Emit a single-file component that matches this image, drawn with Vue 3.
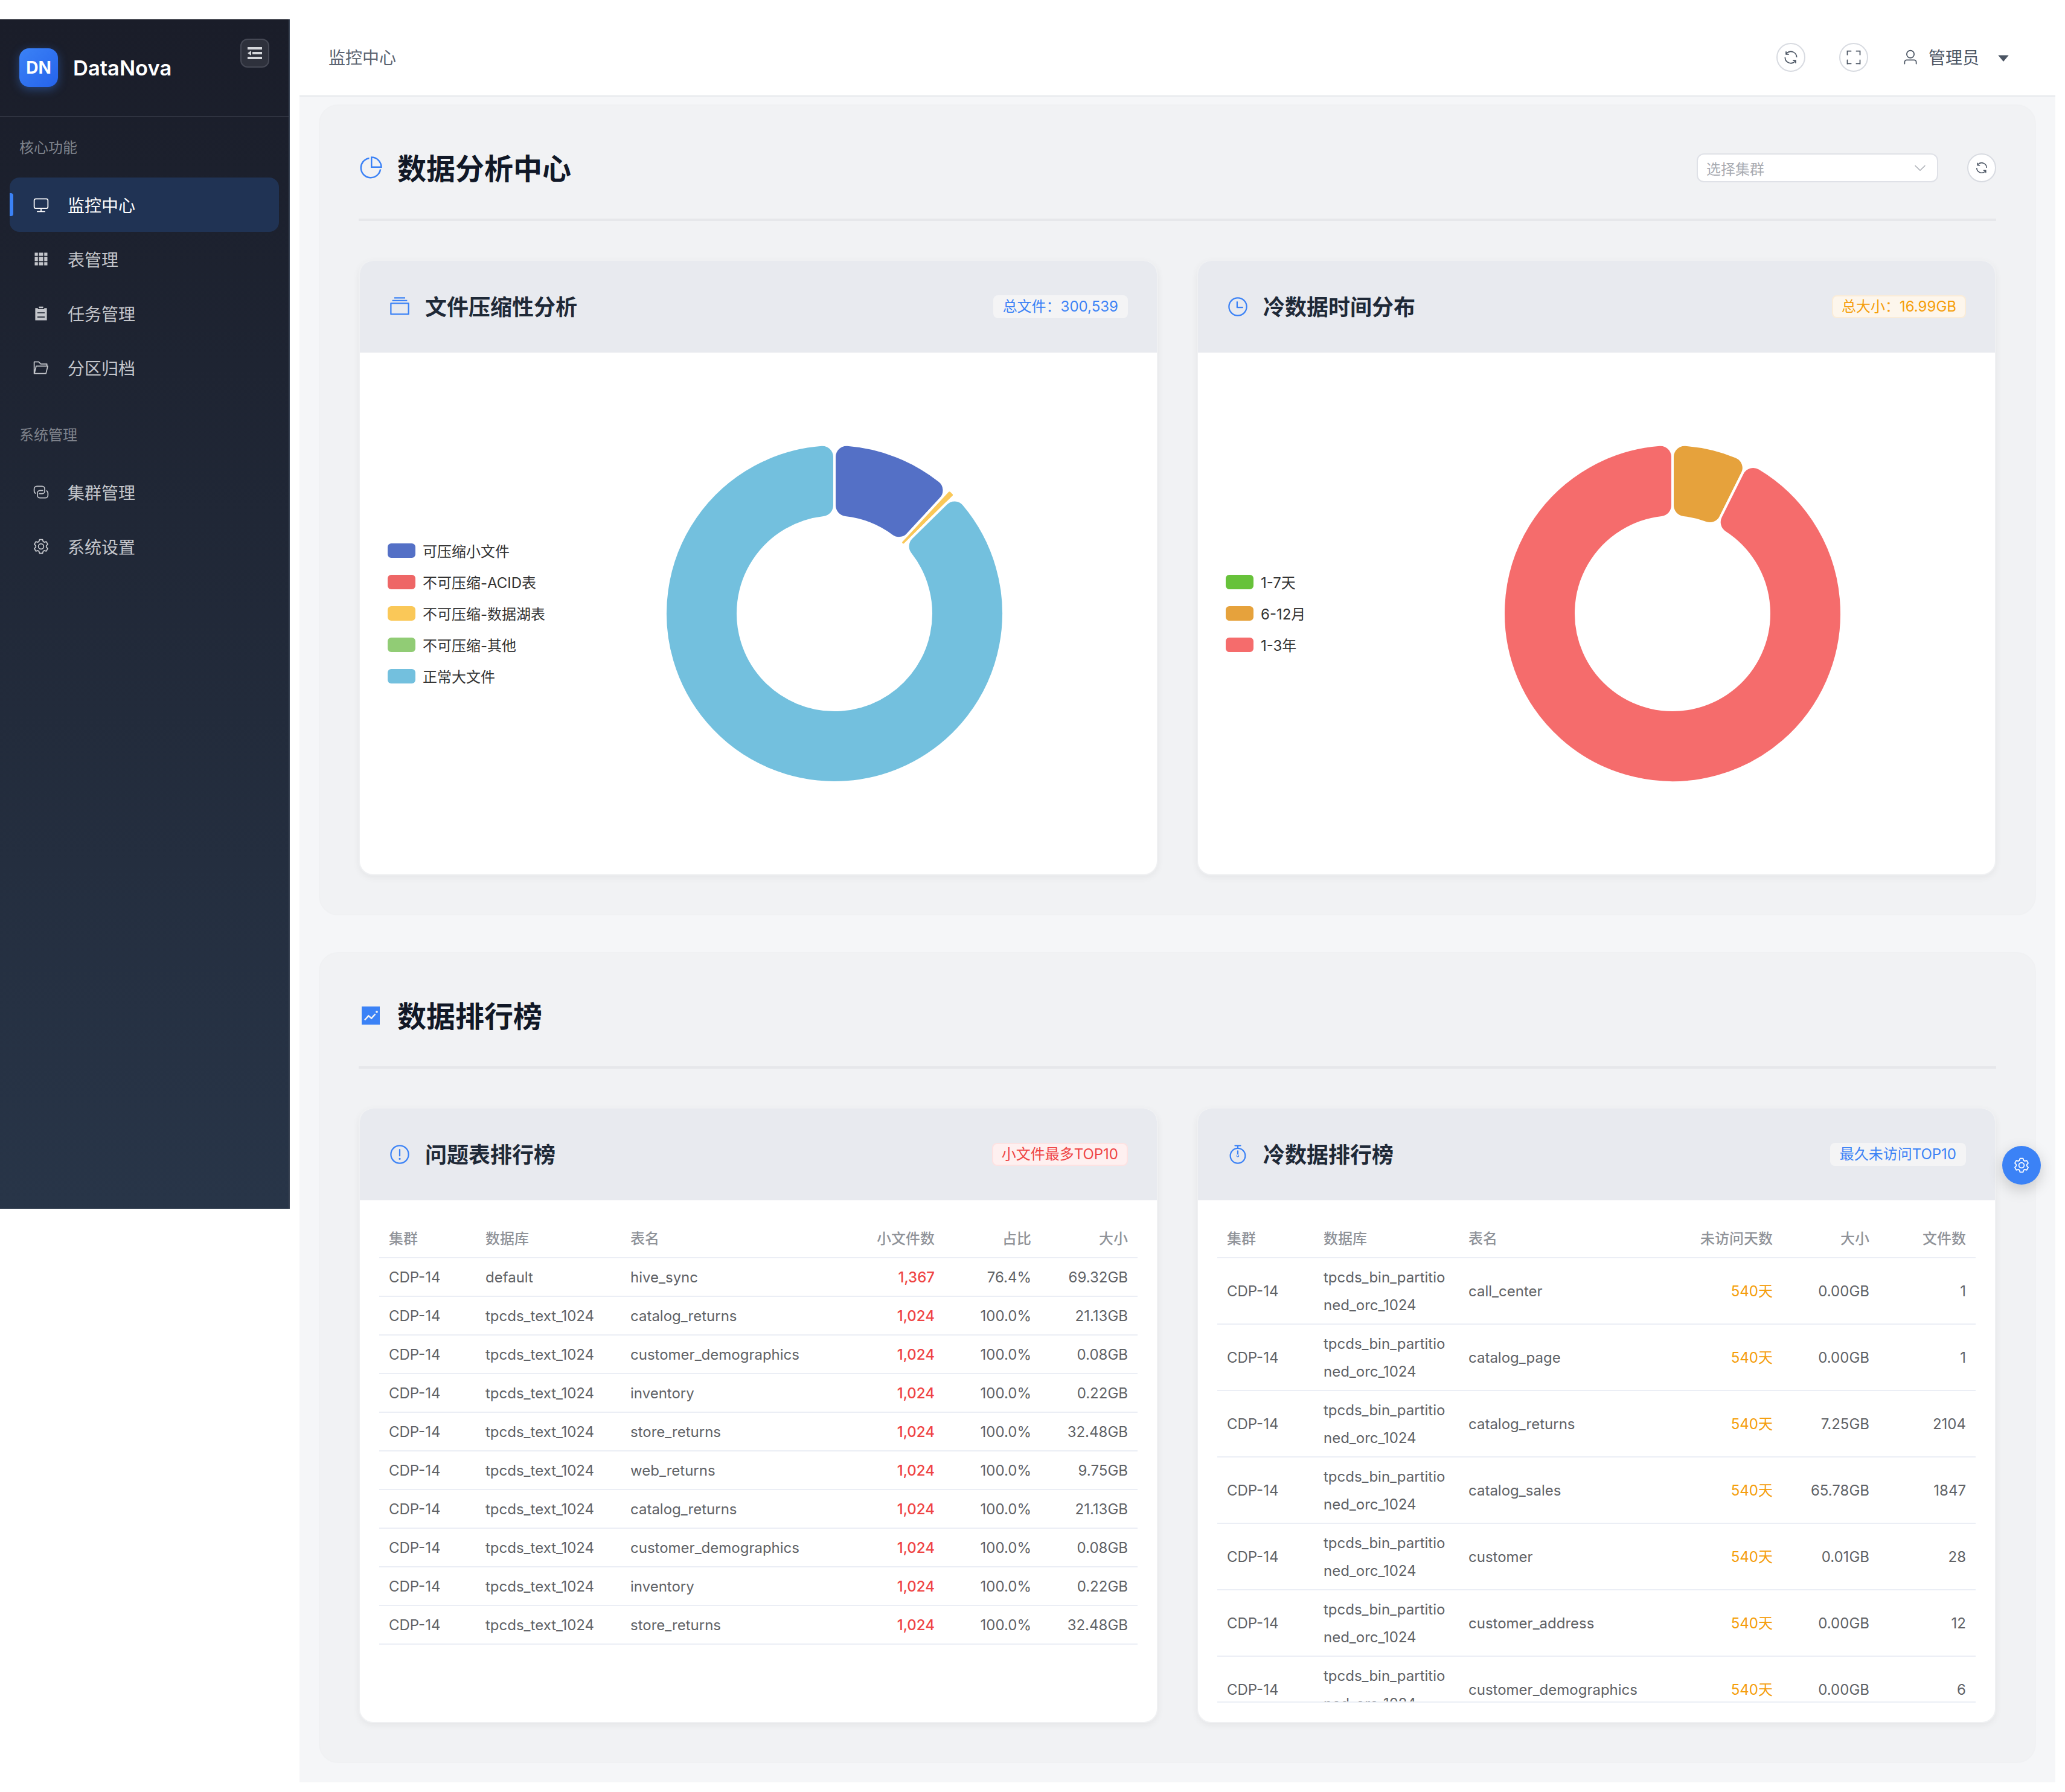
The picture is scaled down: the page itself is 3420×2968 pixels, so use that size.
<template>
  <div class="app">
    <aside class="sidebar">
      <div class="brand">
        <div class="logo">DN</div>
        <span class="brand-name">DataNova</span>
        <button class="fold-btn">
          <svg class="ico" viewBox="0 0 1024 1024"><path :d="ICONS.fold" /></svg>
        </button>
      </div>

      <div v-for="group in menu" :key="group.title" class="nav-group">
        <div class="nav-label">{{ group.title }}</div>
        <div
          v-for="item in group.items"
          :key="item.text"
          class="nav-item"
          :class="{ active: item.active }"
        >
          <svg class="ico nav-ico" viewBox="0 0 1024 1024"><path :d="ICONS[item.icon]" /></svg>
          <span>{{ item.text }}</span>
        </div>
      </div>
    </aside>

    <main class="main">
      <header class="topbar">
        <span class="crumb">监控中心</span>
        <div class="top-actions">
          <button class="circle-btn">
            <svg class="ico" viewBox="0 0 1024 1024"><path :d="ICONS.refresh" /></svg>
          </button>
          <button class="circle-btn">
            <svg class="ico" viewBox="0 0 1024 1024"><path :d="ICONS.fullscreen" /></svg>
          </button>
          <div class="user">
            <svg class="ico" viewBox="0 0 1024 1024"><path :d="ICONS.user" /></svg>
            <span>管理员</span>
            <svg class="ico" viewBox="0 0 1024 1024"><path :d="ICONS.caret" /></svg>
          </div>
        </div>
      </header>

      <div class="content">
        <section class="panel">
          <div class="panel-head">
            <svg class="ico panel-ico" viewBox="0 0 1024 1024"><path :d="ICONS.pie" /></svg>
            <h2>数据分析中心</h2>
            <div class="panel-tools">
              <div class="select">
                <span>选择集群</span>
                <svg class="ico" viewBox="0 0 1024 1024"><path :d="ICONS.arrowDown" /></svg>
              </div>
              <button class="circle-btn small">
                <svg class="ico" viewBox="0 0 1024 1024"><path :d="ICONS.refresh" /></svg>
              </button>
            </div>
          </div>

          <div class="card-grid">
            <div v-for="chart in charts" :key="chart.title" class="card">
              <div class="card-head">
                <svg class="ico card-ico" viewBox="0 0 1024 1024"><path :d="ICONS[chart.icon]" /></svg>
                <h3>{{ chart.title }}</h3>
                <span class="tag" :class="chart.tagType">{{ chart.tag }}</span>
              </div>
              <div class="chart-body">
                <ul class="legend">
                  <li v-for="l in chart.legend" :key="l.name">
                    <i :style="{ background: l.color }"></i>{{ l.name }}
                  </li>
                </ul>
                <svg class="donut" viewBox="-310 -310 620 620">
                  <path
                    v-for="(s, i) in chart.slices"
                    :key="i"
                    :d="sectorPath(s.from, s.to)"
                    :fill="s.color"
                    stroke="#fff"
                    stroke-width="4"
                  />
                </svg>
              </div>
            </div>
          </div>
        </section>

        <section class="panel">
          <div class="panel-head">
            <svg class="ico panel-ico" viewBox="0 0 1024 1024"><path :d="ICONS.trend" /></svg>
            <h2>数据排行榜</h2>
          </div>

          <div class="card-grid">
            <div class="card">
              <div class="card-head">
                <svg class="ico card-ico" viewBox="0 0 1024 1024"><path :d="ICONS.warning" /></svg>
                <h3>问题表排行榜</h3>
                <span class="tag danger">小文件最多TOP10</span>
              </div>
              <div class="table-body">
                <div class="table-wrap">
                  <table>
                    <thead>
                      <tr>
                        <th class="c1">集群</th>
                        <th class="c2">数据库</th>
                        <th>表名</th>
                        <th class="c4 num">小文件数</th>
                        <th class="c5 num">占比</th>
                        <th class="c6 num">大小</th>
                      </tr>
                    </thead>
                    <tbody>
                      <tr v-for="(r, i) in smallFiles" :key="i">
                        <td>CDP-14</td>
                        <td>{{ r.db }}</td>
                        <td>{{ r.table }}</td>
                        <td class="num red">{{ r.count }}</td>
                        <td class="num">{{ r.ratio }}</td>
                        <td class="num">{{ r.size }}</td>
                      </tr>
                    </tbody>
                  </table>
                </div>
              </div>
            </div>

            <div class="card">
              <div class="card-head">
                <svg class="ico card-ico" viewBox="0 0 1024 1024"><path :d="ICONS.timer" /></svg>
                <h3>冷数据排行榜</h3>
                <span class="tag info">最久未访问TOP10</span>
              </div>
              <div class="table-body">
                <div class="table-wrap lined">
                  <table>
                    <thead>
                      <tr>
                        <th class="c1">集群</th>
                        <th class="c2">数据库</th>
                        <th>表名</th>
                        <th class="c4 num">未访问天数</th>
                        <th class="c5 num">大小</th>
                        <th class="c6 num">文件数</th>
                      </tr>
                    </thead>
                    <tbody>
                      <tr v-for="(r, i) in coldData" :key="i">
                        <td>CDP-14</td>
                        <td class="wrap">tpcds_bin_partitioned_orc_1024</td>
                        <td>{{ r.table }}</td>
                        <td class="num orange">540天</td>
                        <td class="num">{{ r.size }}</td>
                        <td class="num">{{ r.files }}</td>
                      </tr>
                    </tbody>
                  </table>
                </div>
              </div>
            </div>
          </div>
        </section>
      </div>
    </main>

    <button class="float-btn">
      <svg class="ico" viewBox="0 0 1024 1024"><path :d="ICONS.setting" /></svg>
    </button>
  </div>
</template>

<script setup>
// element-plus style icons, 1024 box
const ICONS = {
  monitor:
    'M544 768v128h192a32 32 0 1 1 0 64H288a32 32 0 1 1 0-64h192V768H192A128 128 0 0 1 64 640V256a128 128 0 0 1 128-128h640a128 128 0 0 1 128 128v384a128 128 0 0 1-128 128H544zM192 192a64 64 0 0 0-64 64v384a64 64 0 0 0 64 64h640a64 64 0 0 0 64-64V256a64 64 0 0 0-64-64H192z',
  grid: 'M640 384v256H384V384h256zm64 0h192v256H704V384zm-64 512H384V704h256v192zm64 0V704h192v192H704zm-64-768v192H384V128h256zm64 0h192v192H704V128zM320 384v256H128V384h192zm0 512H128V704h192v192zm0-768v192H128V128h192z',
  list: 'M704 192h160v736H160V192h160v64h384v-64zM288 512h448v-64H288v64zm0 256h448v-64H288v64zm96-576V96h256v96H384z',
  folder:
    'M878.08 448H241.92l-96 384h636.16l96-384zM832 384v-64H485.76L357.504 192H128v448l57.92-231.744A32 32 0 0 1 216.96 384H832zm-24.96 512H96a32 32 0 0 1-32-32V160a32 32 0 0 1 32-32h287.872l128.384 128H864a32 32 0 0 1 32 32v96h23.04a32 32 0 0 1 31.04 39.744l-112 448A32 32 0 0 1 807.04 896z',
  connection:
    'M640 384v64H448a128 128 0 0 0-128 128v128a128 128 0 0 0 128 128h320a128 128 0 0 0 128-128V576a128 128 0 0 0-64-110.848V394.88c74.56 26.368 128 97.472 128 181.056v128a192 192 0 0 1-192 192H448a192 192 0 0 1-192-192V576a192 192 0 0 1 192-192h192zM384 640v-64h192a128 128 0 0 0 128-128V320a128 128 0 0 0-128-128H256a128 128 0 0 0-128 128v128a128 128 0 0 0 64 110.848v70.272A192.064 192.064 0 0 1 64 448V320a192 192 0 0 1 192-192h320a192 192 0 0 1 192 192v128a192 192 0 0 1-192 192H384z',
  setting:
    'M600.704 64a32 32 0 0 1 30.464 22.208l35.2 109.376c14.784 7.232 28.928 15.36 42.432 24.512l112.384-24.192a32 32 0 0 1 34.432 15.36L944.32 364.8a32 32 0 0 1-4.032 37.504l-77.12 85.12a357.12 357.12 0 0 1 0 49.024l77.12 85.248a32 32 0 0 1 4.032 37.504l-88.704 153.6a32 32 0 0 1-34.432 15.296L708.8 803.904c-13.44 9.088-27.648 17.28-42.368 24.512l-35.264 109.376A32 32 0 0 1 600.704 960H423.296a32 32 0 0 1-30.464-22.208L357.696 828.48a351.616 351.616 0 0 1-42.56-24.64l-112.32 24.256a32 32 0 0 1-34.432-15.36L79.68 659.2a32 32 0 0 1 4.032-37.504l77.12-85.248a357.12 357.12 0 0 1 0-48.896l-77.12-85.248A32 32 0 0 1 79.68 364.8l88.704-153.6a32 32 0 0 1 34.432-15.296l112.32 24.256c13.568-9.152 27.776-17.408 42.56-24.64l35.2-109.312A32 32 0 0 1 423.232 64H600.64zm-23.424 64H446.72l-36.352 113.088-24.512 11.968a294.113 294.113 0 0 0-34.816 20.096l-22.656 15.36-116.224-25.088-65.28 113.152 79.68 88.192-1.92 27.136a293.12 293.12 0 0 0 0 40.192l1.92 27.136-79.808 88.192 65.344 113.152 116.224-25.024 22.656 15.296a294.113 294.113 0 0 0 34.816 20.096l24.512 11.968L446.72 896h130.688l36.48-113.152 24.448-11.904a288.282 288.282 0 0 0 34.752-20.096l22.592-15.296 116.288 25.024 65.28-113.152-79.744-88.192 1.92-27.136a293.12 293.12 0 0 0 0-40.256l-1.92-27.136 79.808-88.128-65.344-113.152-116.288 24.96-22.592-15.232a287.616 287.616 0 0 0-34.752-20.096l-24.448-11.904L577.344 128zM512 320a192 192 0 1 1 0 384 192 192 0 0 1 0-384zm0 64a128 128 0 1 0 0 256 128 128 0 0 0 0-256z',
  fold: 'M896 192H128v128h768V192zm0 256H384v128h512V448zm0 256H128v128h768V704zM320 384 128 512l192 128V384z',
  refresh:
    'M771.776 794.88A384 384 0 0 1 128 512h64a320 320 0 0 0 555.712 216.448H654.72a32 32 0 1 1 0-64h149.056a32 32 0 0 1 32 32v148.928a32 32 0 1 1-64 0v-50.56zM276.288 295.616h92.992a32 32 0 0 1 0 64H220.16a32 32 0 0 1-32-32V178.56a32 32 0 0 1 64 0v50.56A384 384 0 0 1 896.128 512h-64a320 320 0 0 0-555.776-216.384z',
  fullscreen:
    'm160 96.064 192 .192a32 32 0 0 1 0 64l-192-.192V352a32 32 0 0 1-64 0V96h64v.064zm0 831.872V928H96V672a32 32 0 1 1 64 0v191.936l192-.192a32 32 0 1 1 0 64l-192 .192zM864 96.064V96h64v256a32 32 0 1 1-64 0V160.064l-192 .192a32 32 0 1 1 0-64l192-.192zm0 831.872-192-.192a32 32 0 0 1 0-64l192 .192V672a32 32 0 1 1 64 0v256h-64v-.064z',
  user: 'M512 512a192 192 0 1 0 0-384 192 192 0 0 0 0 384zm0 64a256 256 0 1 1 0-512 256 256 0 0 1 0 512zm320 320v-96a96 96 0 0 0-96-96H288a96 96 0 0 0-96 96v96a32 32 0 1 1-64 0v-96a160 160 0 0 1 160-160h448a160 160 0 0 1 160 160v96a32 32 0 1 1-64 0z',
  caret: 'm192 384 320 384 320-384z',
  arrowDown:
    'M831.872 340.864 512 652.672 192.128 340.864a30.592 30.592 0 0 0-42.752 0 29.12 29.12 0 0 0 0 41.6L489.664 714.24a32 32 0 0 0 44.672 0l340.288-331.712a29.12 29.12 0 0 0 0-41.728 30.592 30.592 0 0 0-42.752 0z',
  pie: 'M448 68.48v64.832A384.128 384.128 0 0 0 512 896a384.128 384.128 0 0 0 378.688-320h64.768A448.128 448.128 0 0 1 64 512 448.128 448.128 0 0 1 448 68.48zM576 97.28V448h350.72A384.064 384.064 0 0 0 576 97.28zM512 64V33.152A448 448 0 0 1 990.848 512H512V64z',
  files:
    'M128 384v448h768V384H128zm-32-64h832a32 32 0 0 1 32 32v512a32 32 0 0 1-32 32H96a32 32 0 0 1-32-32V352a32 32 0 0 1 32-32zm64-128h704v64H160zm96-128h512v64H256z',
  clock:
    'M512 896a384 384 0 1 0 0-768 384 384 0 0 0 0 768zm0 64a448 448 0 1 1 0-896 448 448 0 0 1 0 896zM480 256a32 32 0 0 1 32 32v256a32 32 0 0 1-64 0V288a32 32 0 0 1 32-32zM480 512h256q32 0 32 32t-32 32H480q-32 0-32-32t32-32z',
  warning:
    'M512 64a448 448 0 1 1 0 896 448 448 0 0 1 0-896zm0 832a384 384 0 0 0 0-768 384 384 0 0 0 0 768zm48-176a48 48 0 1 1-96 0 48 48 0 0 1 96 0zm-48-464a32 32 0 0 1 32 32v288a32 32 0 0 1-64 0V288a32 32 0 0 1 32-32z',
  timer:
    'M512 896a320 320 0 1 0 0-640 320 320 0 0 0 0 640zm0 64a384 384 0 1 1 0-768 384 384 0 0 1 0 768zM512 320a32 32 0 0 1 32 32l-.512 224a32 32 0 1 1-64 0L480 352a32 32 0 0 1 32-32zM448 576a64 64 0 1 0 128 0 64 64 0 1 0-128 0zm96-448v128h-64V128h-96a32 32 0 0 1 0-64h256a32 32 0 1 1 0 64h-96z',
  trend:
    'M128 896V128h768v768H128zm291.712-327.296 128 102.4 180.16-201.792-47.744-42.624-139.84 156.608-128-102.4-180.16 201.792 47.744 42.624 139.84-156.608zM816 352a48 48 0 1 0-96 0 48 48 0 0 0 96 0z',
}

const menu = [
  {
    title: '核心功能',
    items: [
      { text: '监控中心', icon: 'monitor', active: true },
      { text: '表管理', icon: 'grid' },
      { text: '任务管理', icon: 'list' },
      { text: '分区归档', icon: 'folder' },
    ],
  },
  {
    title: '系统管理',
    items: [
      { text: '集群管理', icon: 'connection' },
      { text: '系统设置', icon: 'setting' },
    ],
  },
]

const charts = [
  {
    title: '文件压缩性分析',
    icon: 'files',
    tag: '总文件：300,539',
    tagType: 'info',
    legend: [
      { name: '可压缩小文件', color: '#5470c6' },
      { name: '不可压缩-ACID表', color: '#ee6666' },
      { name: '不可压缩-数据湖表', color: '#fac858' },
      { name: '不可压缩-其他', color: '#91cc75' },
      { name: '正常大文件', color: '#73c0de' },
    ],
    slices: [
      { from: 0, to: 42.8, color: '#5470c6' },
      { from: 42.8, to: 45.5, color: '#fac858' },
      { from: 45.5, to: 360, color: '#73c0de' },
    ],
  },
  {
    title: '冷数据时间分布',
    icon: 'clock',
    tag: '总大小：16.99GB',
    tagType: 'warning',
    legend: [
      { name: '1-7天', color: '#67c23a' },
      { name: '6-12月', color: '#e6a23c' },
      { name: '1-3年', color: '#f56c6c' },
    ],
    slices: [
      { from: 0, to: 26.5, color: '#e6a23c' },
      { from: 26.5, to: 360, color: '#f56c6c' },
    ],
  },
]

const smallFiles = [
  { db: 'default', table: 'hive_sync', count: '1,367', ratio: '76.4%', size: '69.32GB' },
  { db: 'tpcds_text_1024', table: 'catalog_returns', count: '1,024', ratio: '100.0%', size: '21.13GB' },
  { db: 'tpcds_text_1024', table: 'customer_demographics', count: '1,024', ratio: '100.0%', size: '0.08GB' },
  { db: 'tpcds_text_1024', table: 'inventory', count: '1,024', ratio: '100.0%', size: '0.22GB' },
  { db: 'tpcds_text_1024', table: 'store_returns', count: '1,024', ratio: '100.0%', size: '32.48GB' },
  { db: 'tpcds_text_1024', table: 'web_returns', count: '1,024', ratio: '100.0%', size: '9.75GB' },
  { db: 'tpcds_text_1024', table: 'catalog_returns', count: '1,024', ratio: '100.0%', size: '21.13GB' },
  { db: 'tpcds_text_1024', table: 'customer_demographics', count: '1,024', ratio: '100.0%', size: '0.08GB' },
  { db: 'tpcds_text_1024', table: 'inventory', count: '1,024', ratio: '100.0%', size: '0.22GB' },
  { db: 'tpcds_text_1024', table: 'store_returns', count: '1,024', ratio: '100.0%', size: '32.48GB' },
]

const coldData = [
  { table: 'call_center', size: '0.00GB', files: 1 },
  { table: 'catalog_page', size: '0.00GB', files: 1 },
  { table: 'catalog_returns', size: '7.25GB', files: 2104 },
  { table: 'catalog_sales', size: '65.78GB', files: 1847 },
  { table: 'customer', size: '0.01GB', files: 28 },
  { table: 'customer_address', size: '0.00GB', files: 12 },
  { table: 'customer_demographics', size: '0.00GB', files: 6 },
]

// rounded ring sector, angles in degrees clockwise from 12 o'clock
const OUTER = 280
const INNER = 160
const CORNER = 20

const polar = (r, deg) => {
  const a = (deg * Math.PI) / 180
  return `${(r * Math.sin(a)).toFixed(2)} ${(-r * Math.cos(a)).toFixed(2)}`
}

const sectorPath = (from, to) => {
  const span = ((to - from) * Math.PI) / 180
  // thin slices cannot carry the full corner
  const c = Math.min(CORNER, (INNER * span) / 2)
  const dOut = (Math.asin(c / (OUTER - c)) * 180) / Math.PI
  const dIn = (Math.asin(c / (INNER + c)) * 180) / Math.PI
  const rOut = Math.sqrt((OUTER - c) ** 2 - c ** 2)
  const rIn = Math.sqrt((INNER + c) ** 2 - c ** 2)
  const large = to - from - 2 * dOut > 180 ? 1 : 0
  const largeIn = to - from - 2 * dIn > 180 ? 1 : 0
  return [
    `M${polar(rOut, from)}`,
    `A${c} ${c} 0 0 1 ${polar(OUTER, from + dOut)}`,
    `A${OUTER} ${OUTER} 0 ${large} 1 ${polar(OUTER, to - dOut)}`,
    `A${c} ${c} 0 0 1 ${polar(rOut, to)}`,
    `L${polar(rIn, to)}`,
    `A${c} ${c} 0 0 1 ${polar(INNER, to - dIn)}`,
    `A${INNER} ${INNER} 0 ${largeIn} 0 ${polar(INNER, from + dIn)}`,
    `A${c} ${c} 0 0 1 ${polar(rIn, from)}`,
    'Z',
  ].join(' ')
}
</script>

<style scoped>
* {
  box-sizing: border-box;
}

.app {
  position: relative;
  display: flex;
  align-items: flex-start;
  width: 3420px;
  height: 2968px;
  padding: 32px 16px 16px 0;
  background: #fff;
  font-family: 'Inter', 'Noto Sans CJK SC', sans-serif;
  color: #303133;
}

button {
  font: inherit;
  padding: 0;
  cursor: pointer;
}

.ico {
  display: block;
  width: 28px;
  height: 28px;
  fill: currentColor;
  flex: none;
}

/* Sidebar */
.sidebar {
  width: 480px;
  height: 1970px;
  flex: none;
  margin-right: 16px;
  background: linear-gradient(180deg, #1a1d29 0%, #283548 100%);
  border-right: 2px solid #3a4454;
}

.brand {
  position: relative;
  display: flex;
  align-items: center;
  gap: 25px;
  height: 162px;
  padding: 0 32px;
  border-bottom: 2px solid #2f3340;
}

.logo {
  width: 64px;
  height: 64px;
  border-radius: 16px;
  background: linear-gradient(135deg, #3b82f6, #2563eb);
  box-shadow: 0 4px 16px rgba(59, 130, 246, 0.4);
  color: #fff;
  font-size: 28px;
  font-weight: 700;
  line-height: 64px;
  text-align: center;
}

.brand-name {
  font-size: 34.5px;
  font-weight: 600;
  color: #fff;
}

.fold-btn {
  position: absolute;
  top: 32px;
  right: 32px;
  width: 48px;
  height: 48px;
  display: flex;
  align-items: center;
  justify-content: center;
  border: 2px solid #454854;
  border-radius: 12px;
  background: #2e313c;
  color: #d6d8dc;
}

.fold-btn .ico {
  width: 32px;
  height: 32px;
}

.nav-group {
  margin-top: 48px;
}

.brand + .nav-group {
  margin-top: 32px;
}

.nav-label {
  height: 38px;
  margin-bottom: 30px;
  padding-left: 32px;
  font-size: 24px;
  line-height: 38px;
  color: #7f838c;
}

.nav-item {
  position: relative;
  display: flex;
  align-items: center;
  gap: 30px;
  height: 90px;
  margin: 0 16px;
  padding-left: 38px;
  border-radius: 16px;
  font-size: 28px;
  color: #c4c6cb;
}

.nav-item.active {
  background: #203354;
  color: #fff;
}

.nav-item.active::before {
  content: '';
  position: absolute;
  left: 0;
  top: 26px;
  width: 6px;
  height: 38px;
  border-radius: 0 4px 4px 0;
  background: #3b82f6;
}

/* Main */
.main {
  flex: 1;
  height: 2920px;
  background: #f5f6f8;
}

.topbar {
  display: flex;
  align-items: center;
  justify-content: space-between;
  height: 128px;
  padding: 0 72px 0 48px;
  background: #fff;
  border-bottom: 2px solid #e6e8ec;
}

.crumb {
  padding-bottom: 2px;
  font-size: 28px;
  color: #5b6370;
}

.top-actions {
  display: flex;
  align-items: center;
  gap: 56px;
}

.circle-btn {
  width: 48px;
  height: 48px;
  display: flex;
  align-items: center;
  justify-content: center;
  border: 2px solid #d8dbe1;
  border-radius: 50%;
  background: #fff;
  color: #4b5563;
}

.circle-btn.small .ico {
  width: 24px;
  height: 24px;
}

.user {
  display: flex;
  align-items: center;
  gap: 16px;
  font-size: 28px;
  color: #4b5563;
}

.user span {
  padding-bottom: 2px;
}

.user .ico:last-child {
  margin-left: 10px;
}

.content {
  padding: 13px 32px 32px;
}

.panel {
  padding: 64px;
  border: 2px solid #f0f1f3;
  border-radius: 32px;
  background: #f1f2f4;
}

.panel + .panel {
  margin-top: 61px;
}

.panel-head {
  display: flex;
  align-items: center;
  gap: 24px;
  height: 127px;
  padding-bottom: 45px;
  margin-bottom: 64px;
  border-bottom: 4px solid #e6e7ea;
}

.panel-ico {
  width: 40px;
  height: 40px;
  color: #3b82f6;
}

.panel-head h2 {
  margin: 0;
  padding-bottom: 4px;
  font-size: 48px;
  font-weight: 600;
  color: #111827;
}

.panel-tools {
  display: flex;
  align-items: center;
  gap: 48px;
  margin-left: auto;
}

.select {
  display: flex;
  align-items: center;
  justify-content: space-between;
  width: 400px;
  height: 48px;
  padding: 0 16px 0 14px;
  border: 2px solid #dfe1e7;
  border-radius: 12px;
  background: #fff;
  font-size: 24px;
  color: #a8abb2;
}

.select .ico {
  width: 24px;
  height: 24px;
}

.card-grid {
  display: grid;
  grid-template-columns: 1fr 1fr;
  gap: 64px;
}

.card {
  display: flex;
  flex-direction: column;
  height: 1020px;
  border: 2px solid #eff0f2;
  border-radius: 24px;
  background: #fff;
  box-shadow: 0 4px 12px rgba(0, 0, 0, 0.05);
  overflow: hidden;
}

.card-head {
  display: flex;
  align-items: center;
  gap: 24px;
  flex: none;
  height: 152px;
  padding: 0 48px;
  background: #e8eaef;
}

.card-ico {
  width: 36px;
  height: 36px;
  color: #3b82f6;
}

.card-head h3 {
  margin: 0;
  padding-bottom: 4px;
  font-size: 36px;
  font-weight: 600;
  color: #1f2937;
}

.tag {
  margin-left: auto;
  height: 38px;
  padding: 0 14px;
  border: 2px solid;
  border-radius: 8px;
  font-size: 24px;
  line-height: 34px;
  white-space: nowrap;
}

.tag.info {
  background: #f4f4f5;
  border-color: #f4f4f5;
  color: #3b82f6;
}

.tag.warning {
  background: #fdf6ec;
  border-color: #faecd8;
  color: #f59e0b;
}

.tag.danger {
  background: #fef0f0;
  border-color: #fde2e2;
  color: #ef4444;
}

/* Donut charts */
.chart-body {
  flex: 1;
  display: flex;
  align-items: center;
}

.legend {
  width: 400px;
  flex: none;
  margin: 0;
  padding: 0 0 2px 46px;
  list-style: none;
  font-size: 24px;
  color: #333;
}

.legend li {
  display: flex;
  align-items: center;
  gap: 12px;
  height: 52px;
}

.legend i {
  width: 46px;
  height: 24px;
  margin-top: 2px;
  border-radius: 6px;
}

.donut {
  width: 620px;
  height: 620px;
  flex: none;
  margin-left: 76px;
}

/* Tables */
.table-body {
  flex: 1;
  padding: 32px;
}

.table-wrap {
  height: 800px;
  overflow: hidden;
}

.table-wrap.lined {
  border-bottom: 2px solid #ebeef5;
}

table {
  width: 100%;
  border-collapse: separate;
  border-spacing: 0;
  table-layout: fixed;
  font-size: 24px;
  color: #606266;
}

th,
td {
  padding: 9px 16px 7px;
  border-bottom: 2px solid #ebeef5;
  line-height: 46px;
  text-align: left;
}

th {
  font-weight: 500;
  color: #909399;
}

.c1 {
  width: 160px;
}
.c2 {
  width: 240px;
}
.c4,
.c5,
.c6 {
  width: 160px;
}

th.num,
td.num {
  text-align: right;
}

td.wrap {
  word-break: break-all;
}

.red {
  color: #ef4444;
  font-weight: 500;
}

.orange {
  color: #f59e0b;
}

.float-btn {
  position: absolute;
  top: 1898px;
  right: 40px;
  width: 64px;
  height: 64px;
  display: flex;
  align-items: center;
  justify-content: center;
  border: none;
  border-radius: 50%;
  background: #3b82f6;
  color: #fff;
  box-shadow: 0 8px 24px rgba(0, 0, 0, 0.18);
}
</style>
